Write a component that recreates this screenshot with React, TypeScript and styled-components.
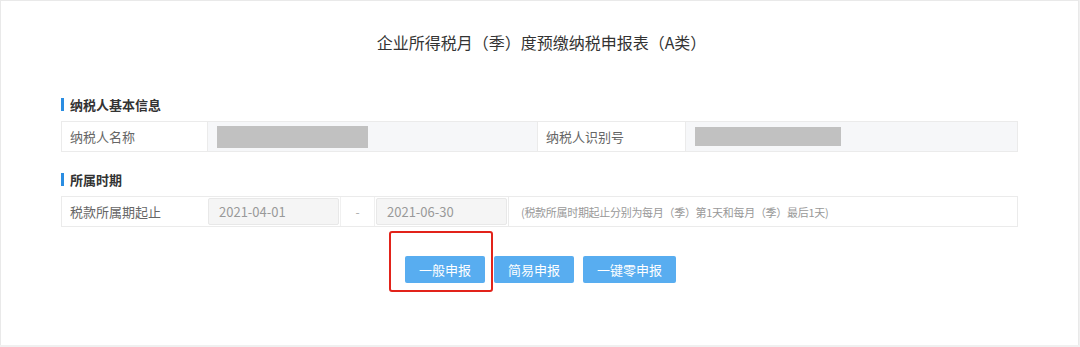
import React from "react";
import styled, { createGlobalStyle } from "styled-components";

const GlobalStyle = createGlobalStyle`
  html, body {
    margin: 0;
    padding: 0;
    background: #f0f0f0;
  }
  body {
    font-family: "Microsoft YaHei", "Noto Sans CJK SC", "Noto Sans", sans-serif;
  }
  * {
    box-sizing: border-box;
  }
`;

const periodNote =
  "(税款所属时期起止分别为每月（季）第1天和每月（季）最后1天)";

function App() {
  return (
    <>
      <GlobalStyle />
      <Card>
        <Title>企业所得税月（季）度预缴纳税申报表（A类）</Title>

        <SectionHeading $top={41}>纳税人基本信息</SectionHeading>
        <InfoRow>
          <LabelCell>纳税人名称</LabelCell>
          <ValueCell>
            <Redacted $width={151} $height={22} />
          </ValueCell>
          <LabelCell $bordered>纳税人识别号</LabelCell>
          <ValueCell>
            <Redacted $width={146} $height={19} />
          </ValueCell>
        </InfoRow>

        <SectionHeading $top={17}>所属时期</SectionHeading>
        <PeriodRow>
          <LabelCell>税款所属期起止</LabelCell>
          <DateCell>
            <DateInput>2021-04-01</DateInput>
          </DateCell>
          <DashCell>-</DashCell>
          <DateCell>
            <DateInput>2021-06-30</DateInput>
          </DateCell>
          <NoteCell>{periodNote}</NoteCell>
        </PeriodRow>

        <ButtonBar>
          <Highlighted>
            <ActionButton>一般申报</ActionButton>
            <RedMark />
          </Highlighted>
          <ActionButton>简易申报</ActionButton>
          <ActionButton>一键零申报</ActionButton>
        </ButtonBar>
      </Card>
    </>
  );
}

const Card = styled.div`
  width: 1079px;
  height: 345px;
  background: #fff;
  border: 1px solid #e9e9e9;
  border-bottom: none;
  padding: 30px 60px 0;
`;

const Title = styled.h1`
  margin: 0;
  font-size: 16px;
  line-height: 22px;
  font-weight: normal;
  color: #333;
  text-align: center;
  padding-left: 4px;
`;

const SectionHeading = styled.h2<{ $top: number }>`
  display: flex;
  align-items: center;
  gap: 6px;
  height: 20px;
  margin: ${(p) => p.$top}px 0 7px;
  font-size: 13px;
  font-weight: bold;
  color: #333;

  &::before {
    content: "";
    width: 3px;
    height: 13px;
    background: #2a8de2;
  }
`;

const Row = styled.div`
  display: grid;
  height: 31px;
  border: 1px solid #ebebeb;
`;

const InfoRow = styled(Row)`
  grid-template-columns: 145px 330px 148px 1fr;
`;

const PeriodRow = styled(Row)`
  grid-template-columns: 145px 133px 35px 133px 1fr;
`;

const LabelCell = styled.div<{ $bordered?: boolean }>`
  display: flex;
  align-items: center;
  padding-left: 8px;
  font-size: 13px;
  color: #666;
  background: #fff;
  border-left: ${(p) => (p.$bordered ? "1px solid #ebebeb" : "none")};
`;

const ValueCell = styled.div`
  display: flex;
  align-items: center;
  padding-left: 9px;
  background: #f6f7f9;
  border-left: 1px solid #ebebeb;
`;

const Redacted = styled.div<{ $width: number; $height: number }>`
  width: ${(p) => p.$width}px;
  height: ${(p) => p.$height}px;
  background: #c1c1c1;
`;

const DateCell = styled.div`
  display: flex;
  padding: 1px 1px;
`;

const DateInput = styled.div`
  flex: 1;
  display: flex;
  align-items: center;
  padding-left: 10px;
  background: #f5f5f5;
  border: 1px solid #e8e8e8;
  border-radius: 2px;
  font-size: 13px;
  color: #999;
`;

const DashCell = styled.div`
  display: flex;
  align-items: center;
  justify-content: center;
  font-size: 12px;
  color: #aaa;
  border-left: 1px solid #f0f0f0;
  border-right: 1px solid #f0f0f0;
`;

const NoteCell = styled.div`
  display: flex;
  align-items: center;
  padding-left: 12px;
  font-size: 11px;
  letter-spacing: -0.3px;
  color: #999;
  border-left: 1px solid #ebebeb;
`;

const ButtonBar = styled.div`
  display: flex;
  justify-content: center;
  gap: 9px;
  margin-top: 29px;
  padding-left: 2px;
`;

const Highlighted = styled.div`
  position: relative;
  display: flex;
`;

const ActionButton = styled.button`
  height: 27px;
  padding: 0 14px;
  border: none;
  border-radius: 2px;
  background: #58adf0;
  color: #fff;
  font-family: inherit;
  font-size: 13px;
  cursor: pointer;
`;

const RedMark = styled.span`
  position: absolute;
  left: -16px;
  top: -25px;
  right: -8px;
  bottom: -9px;
  border: 2px solid #e2231a;
  border-radius: 3px;
  pointer-events: none;
`;

export default App;
